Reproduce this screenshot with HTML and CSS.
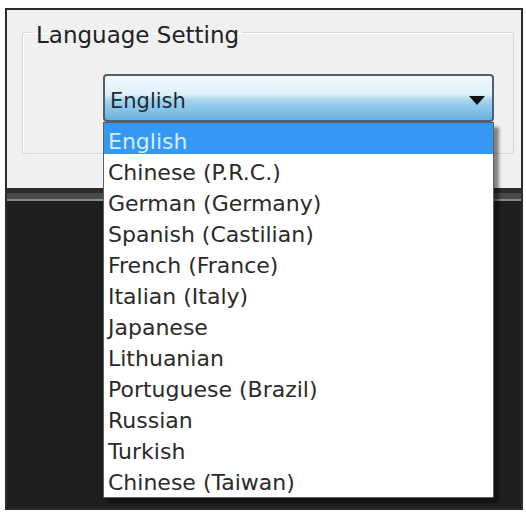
FILE: index.html
```html
<!DOCTYPE html>
<html lang="en">
<head>
    <meta charset="UTF-8">
    <meta name="viewport" content="width=device-width, initial-scale=1.0">
    <title>Language Setting</title>
    <link rel="stylesheet" href="styles.css">
</head>
<body>
    <div class="window">
        <div class="panel">
            <fieldset class="group">
                <legend>Language Setting</legend>
                <div class="combo">
                    <span class="combo-value">English</span>
                    <span class="arrow"></span>
                </div>
            </fieldset>
        </div>
        <div class="divider"></div>

        <!-- open list of the combo box -->
        <ul class="dropdown">
            <li class="selected">English</li>
            <li>Chinese (P.R.C.)</li>
            <li>German (Germany)</li>
            <li>Spanish (Castilian)</li>
            <li>French (France)</li>
            <li>Italian (Italy)</li>
            <li>Japanese</li>
            <li>Lithuanian</li>
            <li>Portuguese (Brazil)</li>
            <li>Russian</li>
            <li>Turkish</li>
            <li>Chinese (Taiwan)</li>
        </ul>
    </div>
</body>
</html>
```

FILE: styles.css
```css
:root {
    --panel: #f0f0f0;
    --dark: #1f1f1f;
    --frame: #2a2a2a;
    --text: #2a2a2a;
    --highlight: #3399f5;
}

* {
    margin: 0;
    padding: 0;
    box-sizing: border-box;
}

body {
    font-family: 'DejaVu Sans', sans-serif;
    background: #ffffff;
    color: var(--text);
}

.window {
    position: relative;
    width: 518px;
    height: 502px;
    margin: 8px 0 0 5px;
    border: 2px solid var(--frame);
    background: var(--dark);
}

.panel {
    height: 178px;
    padding-top: 6px;
    background: var(--panel);
}

.group {
    margin: 0 7px 0 15px;
    padding: 0;
    border: 1px solid #d3d9de;
    border-radius: 3px;
    box-shadow: inset 1px 1px 0 #ffffff;
}

.group legend {
    margin-left: 10px;
    padding: 6px 3px 0;
    font-size: 23px;
    line-height: 26px;
    color: #222;
}

.combo {
    display: flex;
    align-items: center;
    justify-content: space-between;
    height: 48px;
    margin: 26px 19px 31px 80px;
    padding: 5px 7px 0 5px;
    border: 2px solid #4f606c;
    border-radius: 4px;
    background: linear-gradient(to bottom, #f2f9fd 0%, #dff0fa 42%, #a4d3ee 55%, #66b3df 100%);
    font-size: 21px;
    color: #1c2b36;
}

.arrow {
    width: 0;
    height: 0;
    border-left: 8px solid transparent;
    border-right: 8px solid transparent;
    border-top: 9px solid #111;
}

.divider {
    height: 14px;
    background: linear-gradient(to bottom, #2c2c2c 0, #2c2c2c 5px, #4a4a4a 5px, #4a4a4a 11px, #8a8a8a 11px, #8a8a8a 13px, var(--dark) 13px);
}

.dropdown {
    position: absolute;
    left: 96px;
    top: 112px;
    width: 391px;
    height: 376px;
    list-style: none;
    background: #ffffff;
    border: 1px solid #5f5f5f;
    box-shadow: 5px 5px 3px rgba(0, 0, 0, 0.45);
}

.dropdown li {
    height: 31px;
    padding: 7px 0 0 4px;
    font-size: 22px;
    line-height: 24px;
    white-space: nowrap;
}

.dropdown li.selected {
    background: var(--highlight);
    color: #d8ecff;
}
```
